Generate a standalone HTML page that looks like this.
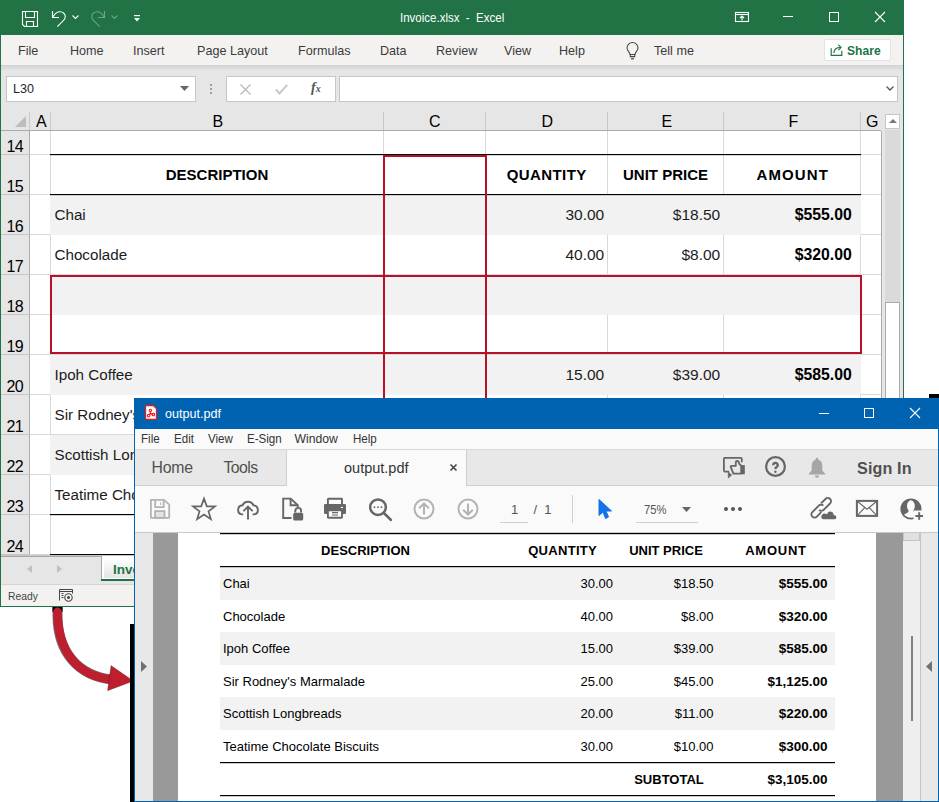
<!DOCTYPE html>
<html><head><meta charset="utf-8">
<style>
*{margin:0;padding:0;box-sizing:border-box}
html,body{width:939px;height:802px;overflow:hidden;background:#fff;font-family:"Liberation Sans",sans-serif;position:relative}
.a{position:absolute}
.t{position:absolute;white-space:nowrap;line-height:1}
svg{position:absolute;overflow:visible}
.rt{font-size:12.6px;color:#3b3b3b;top:45px}
.hl{position:absolute;background:#d4d4d4}
.cell{position:absolute;font-size:15px;color:#000;line-height:1;white-space:nowrap}
.b{font-weight:bold}
.rn{position:absolute;font-size:15px;color:#000;line-height:1;left:0;width:23px;text-align:right}
.pm{font-size:12.2px;color:#333;top:433px;transform:scaleX(0.95);transform-origin:0 0}
</style></head><body>
<!-- ================= EXCEL ================= -->
<div class="a" style="left:0;top:0;width:904px;height:607px;background:#217346"></div>
<div class="a" style="left:1px;top:35px;width:902px;height:571px;background:#e6e6e6"></div>
<!-- title icons -->
<svg style="left:22px;top:11px" width="16" height="16" viewBox="0 0 16 16" fill="none" stroke="#fff" stroke-width="1.1">
<path d="M0.5 0.5H15.5V15.5H2.5L0.5 13.5Z"/><path d="M3.5 0.5V6.5H12.5V0.5"/><path d="M4.5 15.5V10.5H11.5V15.5"/></svg>
<svg style="left:51px;top:11px" width="16" height="16" viewBox="0 0 16 16" fill="none" stroke="#fff" stroke-width="1.1">
<path d="M1.5 0V6.5H8"/><path d="M2 6C3.5 3 5.8 0.8 9 0.8C12 0.8 14.3 3 14.3 5.6C14.3 7.4 13.5 8.6 12.3 9.6L6.3 15.7"/></svg>
<svg style="left:72px;top:15px" width="7" height="4" viewBox="0 0 7 4" fill="none" stroke="#fff" stroke-width="1.1"><path d="M0.5 0.5L3.5 3.5L6.5 0.5"/></svg>
<svg style="left:90px;top:11px" width="16" height="16" viewBox="0 0 16 16" fill="none" stroke="rgba(255,255,255,0.35)" stroke-width="1.1">
<path d="M14.5 0V6.5H8"/><path d="M14 6C12.5 3 10.2 0.8 7 0.8C4 0.8 1.7 3 1.7 5.6C1.7 7.4 2.5 8.6 3.7 9.6L9.7 15.7"/></svg>
<svg style="left:111px;top:15px" width="7" height="4" viewBox="0 0 7 4" fill="none" stroke="rgba(255,255,255,0.35)" stroke-width="1.1"><path d="M0.5 0.5L3.5 3.5L6.5 0.5"/></svg>
<svg style="left:134px;top:15px" width="6" height="7" viewBox="0 0 6 7"><rect x="0" y="0" width="6" height="1.2" fill="#fff"/><path d="M0 3H6L3 6.5Z" fill="#fff"/></svg>
<div class="t" style="left:400px;top:11.3px;font-size:13px;color:#fff;transform:scaleX(0.885);transform-origin:0 0">Invoice.xlsx&nbsp; -&nbsp; Excel</div>
<svg style="left:735px;top:12px" width="14" height="10" viewBox="0 0 14 10" fill="none" stroke="#fff" stroke-width="1.1"><rect x="0.5" y="0.5" width="13" height="9"/><path d="M0.5 2.5H13.5"/><path d="M7 8.5V4M5 6L7 4L9 6"/></svg>
<div class="a" style="left:783px;top:16px;width:10px;height:1px;background:#fff"></div>
<div class="a" style="left:829px;top:12px;width:10px;height:10px;border:1px solid #fff"></div>
<svg style="left:875px;top:12px" width="10" height="10" viewBox="0 0 10 10" stroke="#fff" stroke-width="1.1"><path d="M0 0L10 10M10 0L0 10"/></svg>
<!-- ribbon tabs -->
<div class="a" style="left:1px;top:35px;width:902px;height:30px;background:#f3f2f1"></div>
<div class="a" style="left:1px;top:65px;width:902px;height:6px;background:linear-gradient(#d2d2d2,#e6e6e6)"></div>
<div class="t rt" style="left:18px">File</div>
<div class="t rt" style="left:70px">Home</div>
<div class="t rt" style="left:133px">Insert</div>
<div class="t rt" style="left:197px">Page Layout</div>
<div class="t rt" style="left:298px">Formulas</div>
<div class="t rt" style="left:380px">Data</div>
<div class="t rt" style="left:436px">Review</div>
<div class="t rt" style="left:504px">View</div>
<div class="t rt" style="left:559px">Help</div>
<svg style="left:626px;top:42px" width="13" height="18" viewBox="0 0 13 18" fill="none" stroke="#444" stroke-width="1.05"><path d="M4 12.5C4 10.3 1 8.8 1 6A5.5 5.5 0 0 1 12 6C12 8.8 9 10.3 9 12.5Z"/><path d="M4.3 12.5V14.6H8.7V12.5"/><path d="M5 16.8H8" stroke-width="1.2"/></svg>
<div class="t rt" style="left:654px">Tell me</div>
<div class="a" style="left:824px;top:38.5px;width:66.5px;height:22.5px;background:#fff;border:1px solid #e3e3e3;border-radius:2px"></div>
<svg style="left:830px;top:43px" width="14" height="14" viewBox="0 0 14 14" fill="none" stroke="#217346" stroke-width="1.15"><path d="M1.2 5.2V12.4H11.8V7.8"/><path d="M3.8 10C4.2 6.6 6.6 4.4 10.6 4.4"/><path d="M8.3 1.6L11.1 4.4L8.4 7.1"/></svg>
<div class="t" style="left:847px;top:44px;font-size:13px;font-weight:bold;color:#217346;transform:scaleX(0.93);transform-origin:0 0">Share</div>
<!-- formula bar -->
<div class="a" style="left:6px;top:76px;width:190px;height:26px;background:#fff;border:1px solid #c6c6c6"></div>
<div class="t" style="left:13px;top:83px;font-size:12.6px;color:#262626">L30</div>
<svg style="left:180px;top:86px" width="9" height="5" viewBox="0 0 9 5"><path d="M0 0H9L4.5 5Z" fill="#666"/></svg>
<div class="a" style="left:210px;top:84px;width:2px;height:2px;background:#a0a0a0"></div>
<div class="a" style="left:210px;top:88px;width:2px;height:2px;background:#a0a0a0"></div>
<div class="a" style="left:210px;top:92px;width:2px;height:2px;background:#a0a0a0"></div>
<div class="a" style="left:226px;top:76px;width:110px;height:26px;background:#fff;border:1px solid #c6c6c6"></div>
<svg style="left:240px;top:84px" width="11" height="11" viewBox="0 0 11 11" stroke="#b9b9b9" stroke-width="1.3"><path d="M0.5 0.5L10.5 10.5M10.5 0.5L0.5 10.5"/></svg>
<svg style="left:275px;top:84px" width="13" height="11" viewBox="0 0 13 11" fill="none" stroke="#c8c8c8" stroke-width="2"><path d="M0.8 5.5L4.5 9.5L12.2 0.8"/></svg>
<div class="t" style="left:311px;top:81px;font-size:14px;font-style:italic;font-family:'Liberation Serif',serif;color:#555;font-weight:bold">f<span style="font-size:10px">x</span></div>
<div class="a" style="left:339px;top:76px;width:559px;height:26px;background:#fff;border:1px solid #c6c6c6"></div>
<svg style="left:886px;top:86px" width="8" height="5" viewBox="0 0 8 5" fill="none" stroke="#555" stroke-width="1.3"><path d="M0.5 0.5L4 4L7.5 0.5"/></svg>
<!-- column headers -->
<div class="a" style="left:1px;top:111px;width:880px;height:20px;background:#e6e6e6"></div>
<svg style="left:15px;top:116px" width="12" height="11" viewBox="0 0 12 11"><path d="M11 0V11H0Z" fill="#bdbdbd"/></svg>
<div class="a" style="left:1px;top:130px;width:880px;height:1px;background:#ababab"></div>
<div class="a" style="left:29px;top:112px;width:1px;height:18px;background:#c8c8c8"></div>
<div class="a" style="left:50px;top:112px;width:1px;height:18px;background:#c8c8c8"></div>
<div class="a" style="left:383px;top:112px;width:1px;height:18px;background:#c8c8c8"></div>
<div class="a" style="left:485px;top:112px;width:1px;height:18px;background:#c8c8c8"></div>
<div class="a" style="left:607px;top:112px;width:1px;height:18px;background:#c8c8c8"></div>
<div class="a" style="left:723px;top:112px;width:1px;height:18px;background:#c8c8c8"></div>
<div class="a" style="left:860px;top:112px;width:1px;height:18px;background:#c8c8c8"></div>
<div class="t" style="left:36.0px;top:114px;font-size:16px;color:#000">A</div>
<div class="t" style="left:212.5px;top:114px;font-size:16px;color:#000">B</div>
<div class="t" style="left:429.0px;top:114px;font-size:16px;color:#000">C</div>
<div class="t" style="left:541.5px;top:114px;font-size:16px;color:#000">D</div>
<div class="t" style="left:661.5px;top:114px;font-size:16px;color:#000">E</div>
<div class="t" style="left:788.5px;top:114px;font-size:16px;color:#000">F</div>
<div class="t" style="left:866.0px;top:114px;font-size:16px;color:#000">G</div>
<!-- row headers + grid -->
<div class="a" style="left:1px;top:131px;width:29px;height:424px;background:#e6e6e6"></div>
<div class="a" style="left:29px;top:131px;width:1px;height:424px;background:#ababab"></div>
<div class="a" style="left:30px;top:131px;width:851px;height:424px;background:#fff"></div>
<div class="a" style="left:881px;top:131px;width:1px;height:424px;background:#ababab"></div>
<!-- scrollbar -->
<div class="a" style="left:885px;top:114px;width:15px;height:15px;background:#fff;border:1px solid #c6c6c6"></div>
<svg style="left:889px;top:119px" width="8" height="4" viewBox="0 0 8 4"><path d="M0 4H8L4 0Z" fill="#777"/></svg>
<div class="a" style="left:885px;top:130px;width:15px;height:425px;background:#dadada"></div>
<div class="a" style="left:885px;top:302px;width:15px;height:253px;background:#fff;border:1px solid #ababab"></div>
<div class="a" style="left:50px;top:131px;width:1px;height:424px;background:#d9d9d9;"></div>
<div class="a" style="left:383px;top:131px;width:1px;height:424px;background:#d9d9d9;"></div>
<div class="a" style="left:485px;top:131px;width:1px;height:424px;background:#d9d9d9;"></div>
<div class="a" style="left:607px;top:131px;width:1px;height:424px;background:#d9d9d9;"></div>
<div class="a" style="left:723px;top:131px;width:1px;height:424px;background:#d9d9d9;"></div>
<div class="a" style="left:860px;top:131px;width:1px;height:424px;background:#d9d9d9;"></div>
<div class="a" style="left:30px;top:154px;width:851px;height:1px;background:#d9d9d9;"></div>
<div class="a" style="left:1px;top:154px;width:29px;height:1px;background:#c6c6c6;"></div>
<div class="a" style="left:30px;top:194px;width:851px;height:1px;background:#d9d9d9;"></div>
<div class="a" style="left:1px;top:194px;width:29px;height:1px;background:#c6c6c6;"></div>
<div class="a" style="left:30px;top:234px;width:851px;height:1px;background:#d9d9d9;"></div>
<div class="a" style="left:1px;top:234px;width:29px;height:1px;background:#c6c6c6;"></div>
<div class="a" style="left:30px;top:274px;width:851px;height:1px;background:#d9d9d9;"></div>
<div class="a" style="left:1px;top:274px;width:29px;height:1px;background:#c6c6c6;"></div>
<div class="a" style="left:30px;top:314px;width:851px;height:1px;background:#d9d9d9;"></div>
<div class="a" style="left:1px;top:314px;width:29px;height:1px;background:#c6c6c6;"></div>
<div class="a" style="left:30px;top:354px;width:851px;height:1px;background:#d9d9d9;"></div>
<div class="a" style="left:1px;top:354px;width:29px;height:1px;background:#c6c6c6;"></div>
<div class="a" style="left:30px;top:394px;width:851px;height:1px;background:#d9d9d9;"></div>
<div class="a" style="left:1px;top:394px;width:29px;height:1px;background:#c6c6c6;"></div>
<div class="a" style="left:30px;top:434px;width:851px;height:1px;background:#d9d9d9;"></div>
<div class="a" style="left:1px;top:434px;width:29px;height:1px;background:#c6c6c6;"></div>
<div class="a" style="left:30px;top:474px;width:851px;height:1px;background:#d9d9d9;"></div>
<div class="a" style="left:1px;top:474px;width:29px;height:1px;background:#c6c6c6;"></div>
<div class="a" style="left:30px;top:514px;width:851px;height:1px;background:#d9d9d9;"></div>
<div class="a" style="left:1px;top:514px;width:29px;height:1px;background:#c6c6c6;"></div>
<div class="a" style="left:30px;top:554px;width:851px;height:1px;background:#d9d9d9;"></div>
<div class="a" style="left:1px;top:554px;width:29px;height:1px;background:#c6c6c6;"></div>
<div class="a" style="left:50px;top:195px;width:811px;height:40px;background:#f2f2f2;"></div>
<div class="a" style="left:50px;top:275px;width:811px;height:40px;background:#f2f2f2;"></div>
<div class="a" style="left:50px;top:355px;width:811px;height:40px;background:#f2f2f2;"></div>
<div class="a" style="left:50px;top:435px;width:811px;height:40px;background:#f2f2f2;"></div>
<div class="a" style="left:50px;top:154px;width:811px;height:1px;background:#000;"></div>
<div class="a" style="left:50px;top:155px;width:811px;height:1px;background:rgba(0,0,0,0.15);"></div>
<div class="a" style="left:50px;top:194px;width:811px;height:1px;background:#000;"></div>
<div class="a" style="left:50px;top:195px;width:811px;height:1px;background:rgba(0,0,0,0.15);"></div>
<div class="a" style="left:50px;top:514px;width:811px;height:1px;background:#000;"></div>
<div class="a" style="left:50px;top:515px;width:811px;height:1px;background:rgba(0,0,0,0.15);"></div>
<div class="a" style="left:50px;top:554px;width:811px;height:1px;background:#000;"></div>
<div class="a" style="left:50px;top:555px;width:811px;height:1px;background:rgba(0,0,0,0.15);"></div>
<div class="t" style="right:916px;top:138.96px;font-size:16px;color:#000;letter-spacing:-0.6px">14</div>
<div class="t" style="right:916px;top:178.96px;font-size:16px;color:#000;letter-spacing:-0.6px">15</div>
<div class="t" style="right:916px;top:218.96px;font-size:16px;color:#000;letter-spacing:-0.6px">16</div>
<div class="t" style="right:916px;top:258.96px;font-size:16px;color:#000;letter-spacing:-0.6px">17</div>
<div class="t" style="right:916px;top:298.96px;font-size:16px;color:#000;letter-spacing:-0.6px">18</div>
<div class="t" style="right:916px;top:338.96px;font-size:16px;color:#000;letter-spacing:-0.6px">19</div>
<div class="t" style="right:916px;top:378.96px;font-size:16px;color:#000;letter-spacing:-0.6px">20</div>
<div class="t" style="right:916px;top:418.96px;font-size:16px;color:#000;letter-spacing:-0.6px">21</div>
<div class="t" style="right:916px;top:458.96px;font-size:16px;color:#000;letter-spacing:-0.6px">22</div>
<div class="t" style="right:916px;top:498.96px;font-size:16px;color:#000;letter-spacing:-0.6px">23</div>
<div class="t" style="right:916px;top:538.96px;font-size:16px;color:#000;letter-spacing:-0.6px">24</div>
<div class="a" style="left:383px;top:155px;width:104px;height:400px;border:2px solid #b8102b;border-bottom:0"></div>
<div class="a" style="left:50px;top:275px;width:812px;height:79px;border:2px solid #b8102b"></div>
<div class="t" style="left:17px;width:400px;text-align:center;top:167.31px;font-size:15px;font-weight:bold;color:#000;">DESCRIPTION</div>
<div class="t" style="left:346.70000000000005px;width:400px;text-align:center;top:167.31px;font-size:15px;font-weight:bold;color:#000;letter-spacing:0.42px">QUANTITY</div>
<div class="t" style="left:465.5px;width:400px;text-align:center;top:167.31px;font-size:15px;font-weight:bold;color:#000;">UNIT PRICE</div>
<div class="t" style="left:592.7px;width:400px;text-align:center;top:167.31px;font-size:15px;font-weight:bold;color:#000;letter-spacing:1.1px">AMOUNT</div>
<div class="t" style="left:54.5px;top:207.14px;font-size:15.2px;color:#1c1c1c;">Chai</div>
<div class="t" style="right:334.79999999999995px;top:207.39px;font-size:15.5px;color:#1c1c1c;">30.00</div>
<div class="t" style="right:218.79999999999995px;top:207.39px;font-size:15.5px;color:#1c1c1c;">$18.50</div>
<div class="t" style="right:87.20000000000005px;top:207.13px;font-size:15.8px;font-weight:bold;color:#000;">$555.00</div>
<div class="t" style="left:54.5px;top:247.14px;font-size:15.2px;color:#1c1c1c;">Chocolade</div>
<div class="t" style="right:334.79999999999995px;top:247.39px;font-size:15.5px;color:#1c1c1c;">40.00</div>
<div class="t" style="right:218.79999999999995px;top:247.39px;font-size:15.5px;color:#1c1c1c;">$8.00</div>
<div class="t" style="right:87.20000000000005px;top:247.13px;font-size:15.8px;font-weight:bold;color:#000;">$320.00</div>
<div class="t" style="left:54.5px;top:367.14px;font-size:15.2px;color:#1c1c1c;">Ipoh Coffee</div>
<div class="t" style="right:334.79999999999995px;top:367.39px;font-size:15.5px;color:#1c1c1c;">15.00</div>
<div class="t" style="right:218.79999999999995px;top:367.39px;font-size:15.5px;color:#1c1c1c;">$39.00</div>
<div class="t" style="right:87.20000000000005px;top:367.13px;font-size:15.8px;font-weight:bold;color:#000;">$585.00</div>
<div class="t" style="left:54.5px;top:407.14px;font-size:15.2px;color:#1c1c1c;">Sir Rodney&#39;s Marmalade</div>
<div class="t" style="right:334.79999999999995px;top:407.39px;font-size:15.5px;color:#1c1c1c;">25.00</div>
<div class="t" style="right:218.79999999999995px;top:407.39px;font-size:15.5px;color:#1c1c1c;">$45.00</div>
<div class="t" style="right:87.20000000000005px;top:407.13px;font-size:15.8px;font-weight:bold;color:#000;">$1,125.00</div>
<div class="t" style="left:54.5px;top:447.14px;font-size:15.2px;color:#1c1c1c;">Scottish Longbreads</div>
<div class="t" style="right:334.79999999999995px;top:447.39px;font-size:15.5px;color:#1c1c1c;">20.00</div>
<div class="t" style="right:218.79999999999995px;top:447.39px;font-size:15.5px;color:#1c1c1c;">$11.00</div>
<div class="t" style="right:87.20000000000005px;top:447.13px;font-size:15.8px;font-weight:bold;color:#000;">$220.00</div>
<div class="t" style="left:54.5px;top:487.14px;font-size:15.2px;color:#1c1c1c;">Teatime Chocolate Biscuits</div>
<div class="t" style="right:334.79999999999995px;top:487.39px;font-size:15.5px;color:#1c1c1c;">30.00</div>
<div class="t" style="right:218.79999999999995px;top:487.39px;font-size:15.5px;color:#1c1c1c;">$10.00</div>
<div class="t" style="right:87.20000000000005px;top:487.13px;font-size:15.8px;font-weight:bold;color:#000;">$300.00</div>
<!-- sheet tabs -->
<div class="a" style="left:1px;top:555px;width:902px;height:29px;background:#e6e6e6;border-top:1px solid #c6c6c6"></div>
<svg style="left:27px;top:565px" width="5" height="8" viewBox="0 0 5 8"><path d="M5 0V8L0 4Z" fill="#c0c0c0"/></svg>
<svg style="left:57px;top:565px" width="5" height="8" viewBox="0 0 5 8"><path d="M0 0V8L5 4Z" fill="#c0c0c0"/></svg>
<div class="a" style="left:1px;top:556px;width:101px;height:24px;border-top:1px solid #a8a8a8;border-right:1px solid #a8a8a8"></div>
<div class="a" style="left:102px;top:556px;width:60px;height:25px;background:#fff"></div>
<div class="a" style="left:104px;top:560px;width:56px;height:18px;background:linear-gradient(#fcfcfc,#e4e4e4)"></div>
<div class="a" style="left:101px;top:579px;width:60px;height:2px;background:#217346"></div>
<div class="t" style="left:113px;top:563px;font-size:13.5px;font-weight:bold;color:#217346">Invoice</div>
<!-- status bar -->
<div class="a" style="left:1px;top:584px;width:902px;height:22px;background:#f3f2f1;border-top:1px solid #d6d6d6"></div>
<div class="t" style="left:8px;top:591px;font-size:11.5px;color:#444;transform:scaleX(0.9);transform-origin:0 0">Ready</div>
<svg style="left:58px;top:588px" width="16" height="15" viewBox="0 0 16 15" fill="none" stroke="#444" stroke-width="1"><path d="M1.5 12.5V1.5H14.5V5.5"/><path d="M1.5 3.5H14.5"/><path d="M3.5 5.5H5.5M3.5 7.5H5.5M3.5 9.5H5.5" stroke-width="1.1"/><circle cx="10.5" cy="9.5" r="3.7" fill="#f3f2f1" stroke-width="1.1"/><circle cx="10.5" cy="9.5" r="1.5" fill="#444" stroke="none"/></svg>

<!-- ================= ARROW ================= -->
<svg style="left:0;top:0" width="939" height="802" viewBox="0 0 939 802">
<path d="M57.5 607V615C57.5 652 78 676 112 679.5" fill="none" stroke="rgba(0,0,0,0.55)" stroke-width="10"/><rect x="52.5" y="607" width="10" height="5" fill="#000"/>
<path d="M57.5 612C57.5 652 78 676 112 679.5" fill="none" stroke="#be1e2d" stroke-width="8.8" stroke-linecap="round"/>
<path d="M111 665.5L107.5 690.8L133.5 681Z" fill="#be1e2d" stroke="rgba(0,0,0,0.35)" stroke-width="0.6"/>
</svg>
<div class="a" style="left:130px;top:624px;width:4px;height:178px;background:#000"></div>
<div class="a" style="left:929px;top:394px;width:10px;height:4px;background:#000"></div>
<!-- ================= PDF ================= -->
<div class="a" style="left:134px;top:398px;width:805px;height:404px;background:#0063b1"></div>
<div class="a" style="left:135px;top:429px;width:803px;height:372px;background:#fafafa"></div>
<svg style="left:145px;top:405px" width="12" height="15" viewBox="0 0 12 15" fill="none" stroke="#f41414" stroke-width="1.1">
<path d="M0.6 0.6H8.3L11.4 3.7V14.4H0.6Z" fill="#fbfbfb"/><circle cx="5.4" cy="5.4" r="1.15"/><circle cx="3.6" cy="10.5" r="1.25"/><circle cx="8.4" cy="9.6" r="1.25"/><path d="M5.4 6.5V8.4L4.4 9.6M5.4 8.4L7.3 9.4" stroke-width="1.3"/></svg>
<div class="t" style="left:165px;top:408px;font-size:12.6px;color:#fff">output.pdf</div>
<div class="a" style="left:819px;top:413px;width:10px;height:1px;background:#fff"></div>
<div class="a" style="left:864px;top:408px;width:10px;height:10px;border:1px solid #fff"></div>
<svg style="left:910px;top:408px" width="10" height="10" viewBox="0 0 10 10" stroke="#fff" stroke-width="1.1"><path d="M0 0L10 10M10 0L0 10"/></svg>
<!-- menu -->
<div class="t pm" style="left:141.2px">File</div>
<div class="t pm" style="left:173.5px">Edit</div>
<div class="t pm" style="left:208px">View</div>
<div class="t pm" style="left:246.8px">E-Sign</div>
<div class="t pm" style="left:294.5px;transform:none">Window</div>
<div class="t pm" style="left:353px">Help</div>
<div class="a" style="left:135px;top:449px;width:803px;height:1px;background:#d9d9d9"></div>
<!-- tabs -->
<div class="a" style="left:135px;top:450px;width:803px;height:36px;background:#e8e8e8"></div>
<div class="a" style="left:286px;top:450px;width:181px;height:36px;background:#fafafa;border-left:1px solid #cfcfcf;border-right:1px solid #cfcfcf"></div>
<div class="a" style="left:135px;top:485px;width:151px;height:1px;background:#cfcfcf"></div>
<div class="a" style="left:467px;top:485px;width:471px;height:1px;background:#cfcfcf"></div>
<div class="t" style="left:151.5px;top:459.5px;font-size:15.8px;letter-spacing:-0.2px;color:#505050">Home</div>
<div class="t" style="left:223.5px;top:459.5px;font-size:15.8px;letter-spacing:-0.55px;color:#505050">Tools</div>
<div class="t" style="left:344px;top:461px;font-size:14.5px;color:#333">output.pdf</div>
<svg style="left:450px;top:464px" width="7" height="7" viewBox="0 0 7 7" stroke="#444" stroke-width="1.6"><path d="M0.5 0.5L6.5 6.5M6.5 0.5L0.5 6.5"/></svg>
<div class="t" style="left:857px;top:459.5px;font-size:16.2px;font-weight:bold;color:#505050;letter-spacing:0.1px">Sign In</div>
<!-- toolbar -->
<div class="a" style="left:135px;top:532px;width:803px;height:1px;background:#c9c9c9"></div>
<div class="t" style="left:511px;top:503px;font-size:13px;color:#555">1</div>
<div class="a" style="left:500px;top:522px;width:28px;height:1px;background:#cfcfcf"></div>
<div class="t" style="left:533.5px;top:503px;font-size:13px;color:#555">/&nbsp; 1</div>
<div class="a" style="left:572px;top:495px;width:1px;height:28px;background:#cfcfcf"></div>
<svg style="left:598px;top:499px" width="14" height="20" viewBox="0 0 14 20"><path d="M1 0.5L13.5 12H8L10.5 18L7.5 19.5L5 13L1 16.5Z" fill="#1473e6" stroke="#1473e6" stroke-width="1" stroke-linejoin="round"/></svg>
<div class="t" style="left:644px;top:503px;font-size:13px;color:#555;transform:scaleX(0.86);transform-origin:0 0">75%</div>
<svg style="left:682px;top:507px" width="9" height="5" viewBox="0 0 9 5"><path d="M0 0H9L4.5 5Z" fill="#666"/></svg>
<div class="a" style="left:636px;top:522px;width:62px;height:1px;background:#cfcfcf"></div>
<div class="a" style="left:724px;top:507px;width:4px;height:4px;border-radius:2px;background:#555"></div>
<div class="a" style="left:731px;top:507px;width:4px;height:4px;border-radius:2px;background:#555"></div>
<div class="a" style="left:738px;top:507px;width:4px;height:4px;border-radius:2px;background:#555"></div>
<!-- content -->
<div class="a" style="left:135px;top:533px;width:18px;height:268px;background:#e8e8e8"></div>
<div class="a" style="left:153px;top:533px;width:25px;height:268px;background:#999"></div>
<div class="a" style="left:178px;top:533px;width:698px;height:268px;background:#fff"></div>
<div class="a" style="left:876px;top:533px;width:27px;height:268px;background:#999"></div>
<div class="a" style="left:903px;top:533px;width:18px;height:268px;background:#eee;border-right:1px solid #c4c4c4"></div>
<div class="a" style="left:903px;top:533px;width:17px;height:8px;background:#e0e0e0;border:1px solid #c4c4c4;border-top:0"></div>
<div class="a" style="left:911px;top:636px;width:2px;height:85px;background:#808080"></div>
<div class="a" style="left:921px;top:533px;width:17px;height:268px;background:#e8e8e8"></div>
<svg style="left:141px;top:661px" width="6" height="11" viewBox="0 0 6 11"><path d="M0 0V11L6 5.5Z" fill="#707070"/></svg>
<svg style="left:926px;top:661px" width="6" height="11" viewBox="0 0 6 11"><path d="M6 0V11L0 5.5Z" fill="#707070"/></svg>

<!-- toolbar icons -->
<svg style="left:149px;top:498px" width="22" height="22" viewBox="0 0 22 22" fill="none" stroke="#b3b3b3" stroke-width="1.8">
<path d="M1.9 1.9H15L20.2 6.6V19.8H1.9Z" stroke-linejoin="round"/><path d="M6.2 1.9V9.1H14.7V1.9"/><rect x="6.1" y="13.1" width="9.4" height="6.7" fill="#e3e3e3"/><path d="M11.7 4.2V7" stroke-width="1.1"/></svg>
<svg style="left:191px;top:497px" width="26" height="24" viewBox="0 0 26 24" fill="none" stroke="#666" stroke-width="1.7" stroke-linejoin="miter">
<path d="M13 1.6L15.8 9.3L24 9.4L17.5 14.4L19.9 22.3L13 17.6L6.1 22.3L8.5 14.4L2 9.4L10.2 9.3Z"/></svg>
<svg style="left:236px;top:498px" width="24" height="23" viewBox="0 0 24 23" fill="none" stroke="#666" stroke-width="1.9" stroke-linecap="butt">
<path d="M7.2 16.4H5.8A4.6 4.6 0 0 1 6.6 7.3A5.9 5.9 0 0 1 17.4 7.3A4.6 4.6 0 0 1 18.2 16.4H16.6"/><path d="M12 21.5V9M7.4 13.2L12 8.6L16.6 13.2"/></svg>
<svg style="left:281px;top:497px" width="23" height="25" viewBox="0 0 23 25" fill="none" stroke="#666" stroke-width="1.9">
<path d="M10.5 21H2.2V1.6H9.6L16.8 8.2V10.5"/><path d="M9.6 1.6V8.2H16.8"/><path d="M14.3 15.6V13.8A2.9 2.9 0 0 1 20.1 13.8V15.6" stroke-width="1.9"/><rect x="12.2" y="15.8" width="10" height="7.8" rx="1.6" fill="#666" stroke="none"/></svg>
<svg style="left:323px;top:497px" width="24" height="23" viewBox="0 0 24 23" fill="none" stroke="#666" stroke-width="1.9">
<rect x="4.9" y="1.7" width="14.1" height="6.5" rx="0.5"/><path d="M4.9 17H2.3A1.3 1.3 0 0 1 1 15.7V8.4A1.3 1.3 0 0 1 2.3 7.1H21.7A1.3 1.3 0 0 1 23 8.4V15.7A1.3 1.3 0 0 1 21.7 17H19" fill="#666" stroke="none"/><rect x="4.9" y="13.4" width="14.1" height="7.3" rx="0.5" fill="#fafafa"/><path d="M9 15.6H15M9 18H15" stroke-width="1.1"/><path d="M17.8 10.5H20" stroke="#fafafa" stroke-width="1.1"/></svg>
<svg style="left:368px;top:497px" width="25" height="25" viewBox="0 0 25 25" fill="none" stroke="#666" stroke-width="2.5">
<circle cx="10" cy="10.2" r="7.8"/><path d="M15.8 16L23 23" stroke-linecap="round"/><circle cx="6.5" cy="10.2" r="0.9" fill="#666" stroke="none"/><circle cx="10" cy="10.2" r="0.9" fill="#666" stroke="none"/><circle cx="13.5" cy="10.2" r="0.9" fill="#666" stroke="none"/></svg>
<svg style="left:412px;top:497px" width="24" height="24" viewBox="0 0 24 24" fill="none" stroke="#b3b3b3" stroke-width="2">
<circle cx="12" cy="12" r="9.5"/><path d="M12 17.5V6.5M7.2 11.2L12 6.4L16.8 11.2"/></svg>
<svg style="left:456px;top:497px" width="24" height="24" viewBox="0 0 24 24" fill="none" stroke="#b3b3b3" stroke-width="2">
<circle cx="12" cy="12" r="9.5"/><path d="M12 6.5V17.5M7.2 12.8L12 17.6L16.8 12.8"/></svg>
<svg style="left:810px;top:497px" width="27" height="24" viewBox="0 0 27 24" fill="none" stroke="#666" stroke-width="1.9">
<g transform="translate(11.2 10.8) rotate(-45)"><path d="M3 -3.2H9.3A3.2 3.2 0 0 1 9.3 3.2H0.2A3.2 3.2 0 0 1 -3 0"/><path d="M-3 3.2H-9.3A3.2 3.2 0 0 1 -9.3 -3.2H-0.2A3.2 3.2 0 0 1 3 0"/></g>
<path d="M12.6 22.9H24.4A2.7 2.7 0 0 0 24.3 17.5A4 4 0 0 0 16.6 16.4A3.2 3.2 0 0 0 12.6 22.9Z" fill="#666" stroke="#fafafa" stroke-width="1.3"/></svg>
<svg style="left:855px;top:499px" width="24" height="19" viewBox="0 0 24 19" fill="none" stroke="#666">
<rect x="1.9" y="1.9" width="20.2" height="15" stroke-width="2"/><path d="M2.5 2.5L12 10.2L21.5 2.5M2.5 16.3L9.5 8.8M21.5 16.3L14.5 8.8" stroke-width="1.1"/></svg>
<svg style="left:899px;top:497px" width="26" height="24" viewBox="0 0 26 24" fill="none">
<defs><clipPath id="uc"><circle cx="12" cy="12" r="8.7"/></clipPath></defs>
<circle cx="12" cy="12" r="10.6" fill="#666"/>
<g fill="#fafafa"><ellipse cx="11.9" cy="9" rx="3.9" ry="5.7"/><path clip-path="url(#uc)" d="M9.6 13.5Q9.8 15.8 5 17.2Q2 18.5 1 24H24Q22 18.5 19 17.2Q14.2 15.8 14.4 13.5Z"/></g>
<path d="M14.5 13.5H25.5V24H14.5Z" fill="#fafafa"/>
<path d="M20.2 15.3V22.8M16.4 19H24" stroke="#666" stroke-width="1.9"/></svg>
<!-- tab icons -->
<svg style="left:718px;top:452px" width="32" height="30" viewBox="0 0 32 30" fill="none" stroke="#666" stroke-width="1.8" stroke-linejoin="round">
<path d="M11.2 19.7H6.7A1.7 1.7 0 0 1 5.9 18V6.7A1.7 1.7 0 0 1 6.7 5.9H22.9A1.7 1.7 0 0 1 23.8 6.7V10.2"/><path d="M10.3 20V26L13.6 23Z" fill="#666" stroke-width="0.8"/>
<path d="M15.4 21.6L12.8 15.2Q12.4 13.8 14 13.8H17.8V10.5A1.5 1.5 0 0 1 20.8 10.5Q21.2 12.4 23.2 13.8V21.6Z"/><rect x="23" y="13.1" width="3.8" height="9.2" fill="#666" stroke="none"/></svg>
<svg style="left:763px;top:455px" width="25" height="25" viewBox="0 0 25 25" fill="none" stroke="#666" stroke-width="2.2">
<circle cx="12.5" cy="11.5" r="9.4"/><path d="M10.2 10.2A2.25 2.25 0 1 1 13.6 12C12.8 12.5 12.4 12.9 12.4 13.9" stroke-width="2.3"/><circle cx="12.4" cy="16.7" r="1.2" fill="#666" stroke="none"/></svg>
<svg style="left:807px;top:457px" width="20" height="21" viewBox="0 0 20 21" fill="#a6a6a6">
<path d="M10 0.8A1.3 1.3 0 0 1 11.3 2.1V2.7C14.3 3.4 15.3 6 15.3 9V13.5L18.3 16.8V17.5H1.7V16.8L4.7 13.5V9C4.7 6 5.7 3.4 8.7 2.7V2.1A1.3 1.3 0 0 1 10 0.8Z"/><path d="M7.8 18.6H12.2A2.2 2.2 0 0 1 7.8 18.6Z"/></svg>
<div class="a" style="left:220px;top:567px;width:615px;height:33px;background:#f2f2f2;"></div>
<div class="a" style="left:220px;top:632px;width:615px;height:33px;background:#f2f2f2;"></div>
<div class="a" style="left:220px;top:697px;width:615px;height:33px;background:#f2f2f2;"></div>
<div class="a" style="left:220px;top:533px;width:615px;height:1px;background:#000;"></div>
<div class="a" style="left:220px;top:534px;width:615px;height:1px;background:rgba(0,0,0,0.2);"></div>
<div class="a" style="left:220px;top:566px;width:615px;height:1px;background:#000;"></div>
<div class="a" style="left:220px;top:567px;width:615px;height:1px;background:rgba(0,0,0,0.2);"></div>
<div class="a" style="left:220px;top:762px;width:615px;height:1px;background:#000;"></div>
<div class="a" style="left:220px;top:763px;width:615px;height:1px;background:rgba(0,0,0,0.2);"></div>
<div class="a" style="left:220px;top:795px;width:615px;height:1px;background:#000;"></div>
<div class="a" style="left:220px;top:796px;width:615px;height:1px;background:rgba(0,0,0,0.2);"></div>
<div class="t" style="left:165.5px;width:400px;text-align:center;top:544.00px;font-size:13px;font-weight:bold;color:#000;">DESCRIPTION</div>
<div class="t" style="left:362.6px;width:400px;text-align:center;top:544.00px;font-size:13px;font-weight:bold;color:#000;letter-spacing:0.3px">QUANTITY</div>
<div class="t" style="left:466px;width:400px;text-align:center;top:544.00px;font-size:13px;font-weight:bold;color:#000;">UNIT PRICE</div>
<div class="t" style="left:576px;width:400px;text-align:center;top:544.00px;font-size:13px;font-weight:bold;color:#000;letter-spacing:0.75px">AMOUNT</div>
<div class="t" style="left:223px;top:577.00px;font-size:13px;color:#000;">Chai</div>
<div class="t" style="right:326px;top:577.00px;font-size:13px;color:#000;">30.00</div>
<div class="t" style="right:225.5px;top:577.00px;font-size:13px;color:#000;">$18.50</div>
<div class="t" style="right:111.5px;top:576.58px;font-size:13.5px;font-weight:bold;color:#000;">$555.00</div>
<div class="t" style="left:223px;top:610.00px;font-size:13px;color:#000;">Chocolade</div>
<div class="t" style="right:326px;top:610.00px;font-size:13px;color:#000;">40.00</div>
<div class="t" style="right:225.5px;top:610.00px;font-size:13px;color:#000;">$8.00</div>
<div class="t" style="right:111.5px;top:609.58px;font-size:13.5px;font-weight:bold;color:#000;">$320.00</div>
<div class="t" style="left:223px;top:642.00px;font-size:13px;color:#000;">Ipoh Coffee</div>
<div class="t" style="right:326px;top:642.00px;font-size:13px;color:#000;">15.00</div>
<div class="t" style="right:225.5px;top:642.00px;font-size:13px;color:#000;">$39.00</div>
<div class="t" style="right:111.5px;top:641.58px;font-size:13.5px;font-weight:bold;color:#000;">$585.00</div>
<div class="t" style="left:223px;top:675.00px;font-size:13px;color:#000;">Sir Rodney&#39;s Marmalade</div>
<div class="t" style="right:326px;top:675.00px;font-size:13px;color:#000;">25.00</div>
<div class="t" style="right:225.5px;top:675.00px;font-size:13px;color:#000;">$45.00</div>
<div class="t" style="right:111.5px;top:674.58px;font-size:13.5px;font-weight:bold;color:#000;">$1,125.00</div>
<div class="t" style="left:223px;top:707.00px;font-size:13px;color:#000;">Scottish Longbreads</div>
<div class="t" style="right:326px;top:707.00px;font-size:13px;color:#000;">20.00</div>
<div class="t" style="right:225.5px;top:707.00px;font-size:13px;color:#000;">$11.00</div>
<div class="t" style="right:111.5px;top:706.58px;font-size:13.5px;font-weight:bold;color:#000;">$220.00</div>
<div class="t" style="left:223px;top:740.00px;font-size:13px;color:#000;">Teatime Chocolate Biscuits</div>
<div class="t" style="right:326px;top:740.00px;font-size:13px;color:#000;">30.00</div>
<div class="t" style="right:225.5px;top:740.00px;font-size:13px;color:#000;">$10.00</div>
<div class="t" style="right:111.5px;top:739.58px;font-size:13.5px;font-weight:bold;color:#000;">$300.00</div>
<div class="t" style="left:469px;width:400px;text-align:center;top:773.00px;font-size:13px;font-weight:bold;color:#000;">SUBTOTAL</div>
<div class="t" style="right:111.5px;top:772.58px;font-size:13.5px;font-weight:bold;color:#000;">$3,105.00</div>
</body></html>
